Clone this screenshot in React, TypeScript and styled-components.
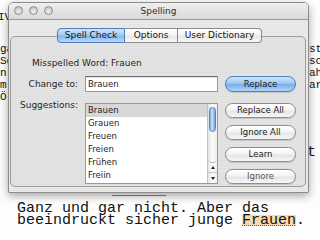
import React from "react";
import styled, { createGlobalStyle } from "styled-components";

const GlobalStyle = createGlobalStyle`
  *, *::before, *::after { box-sizing: border-box; }
  html, body { margin: 0; padding: 0; background: #fff; }
`;

const suggestions = ["Brauen", "Grauen", "Freuen", "Freien", "Frühen", "Freiin"];
const actions = ["Replace All", "Ignore All", "Learn", "Ignore"];
const tabs = [
  { label: "Spell Check", width: 68, active: true },
  { label: "Options", width: 53 },
  { label: "User Dictionary", width: 84 },
];

// the document lines peeking out left and right of the panel
const edgeLines = [
  { left: "ga", right: "st" },
  { left: "Se", right: "so" },
  { left: "n", right: "ah" },
  { left: "m", right: "ar" },
  { left: "Öl", right: "" },
];

const App = () => {
  return (
    <Screen>
      <GlobalStyle />
      <Document>
        <Line $top={11} $shift={-2}>IV</Line>
        {edgeLines.map((l, i) => (
          <EdgeLine key={i} $top={i === 0 ? 20 : 0}>
            <span>{l.left}</span>
            <span>{l.right}</span>
          </EdgeLine>
        ))}
        <Line $size="large" $top={44} $shift={307}>t</Line>
        <Line $size="large" $top={26} $shift={112}>______</Line>
        <Line $size="large" $top={6} $shift={17}>Ganz und gar nicht. Aber das</Line>
        <Line $size="large" $shift={17}>
          beeindruckt sicher junge <Misspelled>Frauen</Misspelled>.
        </Line>
      </Document>

      <Window>
        <TitleBar>
          <Lights>
            <Light />
            <Light />
            <Light />
          </Lights>
          <Title>Spelling</Title>
          <span />
        </TitleBar>

        <Body>
          <Tabs>
            {tabs.map((t) => (
              <Tab key={t.label} $width={t.width} $active={t.active}>
                {t.label}
              </Tab>
            ))}
          </Tabs>

          <TabBox>
            <WordRow>Misspelled Word: Frauen</WordRow>

            <Form>
              <Label>Change to:</Label>
              <TextField>Brauen</TextField>
              <Button $primary>Replace</Button>

              <Label $top>Suggestions:</Label>
              <ListBox>
                <Rows>
                  {suggestions.map((s, i) => (
                    <Row key={s} $selected={i === 0}>{s}</Row>
                  ))}
                </Rows>
                <ScrollBar>
                  <Track>
                    <Thumb />
                  </Track>
                  <ArrowBox>
                    <Arrow $dir="up" />
                  </ArrowBox>
                  <ArrowBox $last>
                    <Arrow $dir="down" />
                  </ArrowBox>
                </ScrollBar>
              </ListBox>
              <ButtonColumn>
                {actions.map((a) => (
                  <Button key={a} $dim={a === "Ignore"}>{a}</Button>
                ))}
              </ButtonColumn>
            </Form>
          </TabBox>
        </Body>
      </Window>
    </Screen>
  );
};

const Screen = styled.div`
  position: relative;
  width: 320px;
  height: 240px;
  overflow: hidden;
  background: #fdfdfd;
`;

const Document = styled.div`
  font-family: "Liberation Mono", "DejaVu Sans Mono", monospace;
  color: #111;
  white-space: pre;
`;

const Line = styled.div<{ $size?: "small" | "large"; $top?: number; $shift?: number }>`
  height: 12px;
  line-height: 12px;
  font-size: ${({ $size }) => ($size === "large" ? 15 : 11)}px;
  margin-top: ${({ $top }) => $top ?? 0}px;
  margin-left: ${({ $shift }) => $shift ?? 0}px;
`;

const EdgeLine = styled.div<{ $top?: number }>`
  display: grid;
  grid-template-columns: 309px auto;
  height: 12px;
  line-height: 12px;
  font-size: 11px;
  margin-top: ${({ $top }) => $top ?? 0}px;
`;

const Misspelled = styled.span`
  display: inline-block;
  height: 11px;
  line-height: 11px;
  background: #f9d8ae;
  text-decoration: underline dotted #d8281c;
  text-decoration-thickness: 1px;
  text-underline-offset: 1px;
`;

const Window = styled.div`
  position: absolute;
  left: 8px;
  top: 2px;
  width: 301px;
  display: flex;
  flex-direction: column;
  border: 1px solid #8c8c8c;
  border-radius: 5px 5px 1px 1px;
  background: repeating-linear-gradient(to bottom, #ebebeb 0 1px, #e4e4e4 1px 2px);
  box-shadow: 0 3px 8px rgba(0, 0, 0, 0.35);
  font-family: "DejaVu Sans", "Liberation Sans", sans-serif;
  color: #1e1e1e;
`;

const TitleBar = styled.div`
  height: 17px;
  display: grid;
  grid-template-columns: 1fr auto 1fr;
  align-items: center;
  padding-bottom: 1px;
  border-bottom: 1px solid #9a9a9a;
  border-radius: 4px 4px 0 0;
  background: linear-gradient(to bottom, #efefef, #d9d9d9);
`;

const Lights = styled.div`
  display: flex;
  gap: 6px;
  padding-left: 5px;
`;

const Light = styled.div`
  width: 9px;
  height: 9px;
  border-radius: 50%;
  border: 1px solid #8e8e8e;
  background: radial-gradient(circle at 50% 70%, #f2f2f2 0%, #d2d2d2 55%, #b4b4b4 100%);
`;

const Title = styled.div`
  font-size: 9px;
  color: #2c2c2c;
  line-height: 12px;
`;

const Body = styled.div`
  display: flex;
  flex-direction: column;
  padding: 8px 2px 5px 1px;
`;

const Tabs = styled.div`
  position: relative;
  z-index: 1;
  display: flex;
  justify-content: center;
  padding-left: 3px;
  height: 15px;
`;

const Tab = styled.div<{ $width: number; $active?: boolean }>`
  width: ${({ $width }) => $width}px;
  height: 15px;
  line-height: 13px;
  text-align: center;
  font-size: 9px;
  color: #141414;
  border: 1px solid ${({ $active }) => ($active ? "#4f7bb6" : "#8a8a8a")};
  border-left-width: 0;
  background: ${({ $active }) =>
    $active
      ? "linear-gradient(to bottom, #cfe5fb 0%, #a2caf3 48%, #83b7ee 52%, #b7d9fa 100%)"
      : "linear-gradient(to bottom, #ffffff 0%, #f3f3f3 48%, #e6e6e6 52%, #f7f7f7 100%)"};

  &:first-child {
    border-left-width: 1px;
    border-radius: 4px 0 0 4px;
  }
  &:last-child {
    border-radius: 0 4px 4px 0;
  }
`;

const TabBox = styled.div`
  margin-top: -7px;
  padding: 20px 9px 2px 1px;
  border: 1px solid #9b9b9b;
  border-radius: 5px;
  background: rgba(0, 0, 0, 0.025);
`;

const WordRow = styled.div`
  font-size: 9px;
  line-height: 12px;
  height: 12px;
  padding-left: 20px;
`;

const Form = styled.div`
  margin-top: 7px;
  display: grid;
  grid-template-columns: 66px 133px 71px;
  column-gap: 7px;
  row-gap: 11px;
`;

const Label = styled.div<{ $top?: boolean }>`
  font-size: 9px;
  line-height: 10px;
  text-align: right;
  align-self: ${({ $top }) => ($top ? "start" : "center")};
  margin-top: ${({ $top }) => ($top ? -3 : 0)}px;
  color: #262626;
`;

const TextField = styled.div`
  height: 16px;
  padding-left: 2px;
  font-size: 8.5px;
  line-height: 14px;
  background: #fff;
  border: 1px solid #9a9a9a;
  border-top-color: #6a6a6a;
  box-shadow: inset 0 1px 1px rgba(0, 0, 0, 0.12);
`;

const Button = styled.div<{ $primary?: boolean; $dim?: boolean }>`
  height: ${({ $primary }) => ($primary ? 16 : 15)}px;
  line-height: ${({ $primary }) => ($primary ? 14 : 13)}px;
  border-radius: 8px;
  text-align: center;
  font-size: 8.5px;
  color: ${({ $dim }) => ($dim ? "#555" : "#1c1c1c")};
  border: 1px solid ${({ $primary }) => ($primary ? "#4d7cba" : "#8d8d8d")};
  background: ${({ $primary }) =>
    $primary
      ? "linear-gradient(to bottom, #d0e6fc 0%, #9fc8f2 45%, #78afea 55%, #afd6fb 100%)"
      : "linear-gradient(to bottom, #ffffff 0%, #f4f4f4 45%, #e5e5e5 55%, #f8f8f8 100%)"};
  box-shadow: 0 1px 1px rgba(0, 0, 0, 0.12);
`;

const ButtonColumn = styled.div`
  display: flex;
  flex-direction: column;
  gap: 7px;
`;

const ListBox = styled.div`
  height: 81px;
  display: flex;
  background: #fff;
  border: 1px solid #999;
`;

const Rows = styled.ul`
  flex: 1;
  margin: 0;
  padding: 0;
  list-style: none;
`;

const Row = styled.li<{ $selected?: boolean }>`
  height: 13px;
  line-height: 13px;
  padding-left: 2px;
  font-size: 8.5px;
  color: #1e1e1e;
  background: ${({ $selected }) => ($selected ? "#d7d7d7" : "transparent")};
`;

const ScrollBar = styled.div`
  width: 10px;
  display: flex;
  flex-direction: column;
  border-left: 1px solid #c2c2c2;
  background: linear-gradient(to right, #e2e2e2, #fbfbfb 45%, #efefef);
`;

const Track = styled.div`
  flex: 1;
  padding: 3px 1px 0 1px;
  border-bottom: 1px solid #b4b4b4;
  border-radius: 0 0 5px 5px;
`;

const Thumb = styled.div`
  height: 25px;
  border-radius: 4px;
  border: 1px solid #5283c2;
  background: linear-gradient(to right, #80ade0, #c6e0f9 40%, #9cc6ef 70%, #6c9dd6);
`;

const ArrowBox = styled.div<{ $last?: boolean }>`
  height: 10px;
  display: flex;
  align-items: center;
  justify-content: center;
  border-bottom: ${({ $last }) => ($last ? "none" : "1px solid #c8c8c8")};
`;

const Arrow = styled.div<{ $dir: "up" | "down" }>`
  width: 0;
  height: 0;
  border-left: 2px solid transparent;
  border-right: 2px solid transparent;
  ${({ $dir }) =>
    $dir === "up" ? "border-bottom: 3px solid #222;" : "border-top: 3px solid #222;"}
`;

export default App;
